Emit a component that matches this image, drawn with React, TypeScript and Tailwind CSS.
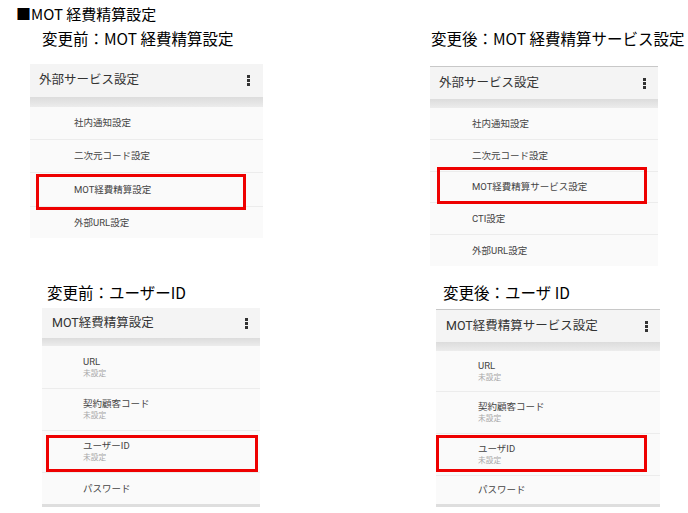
import React from "react";

type Item = { label: string; sub?: string; h: number };
type Box = { x: number; y: number; w: number; h: number };

const docFont = { fontFamily: "'Noto Sans CJK JP', 'DejaVu Sans', sans-serif" };
const uiFont = { fontFamily: "Roboto, 'Noto Sans CJK JP', sans-serif" };

function Kebab() {
  return (
    <div className="flex flex-col gap-[1px]">
      <span className="block w-[3px] h-[3px] bg-[#333]" />
      <span className="block w-[3px] h-[3px] bg-[#333]" />
      <span className="block w-[3px] h-[3px] bg-[#333]" />
    </div>
  );
}

function Panel(props: {
  width: number;
  headerH: number;
  bandH: number;
  title: string;
  titleX: number;
  textX: number;
  items: Item[];
  box: Box;
  topLine?: boolean;
  bottomBand?: boolean;
  kebabRight: number;
}) {
  const { width, headerH, bandH, title, titleX, textX, items, box, topLine, bottomBand, kebabRight } = props;
  return (
    <div className="relative bg-[#fafafa]" style={{ width, ...uiFont }}>
      {topLine && <div className="h-[1px] bg-[#c8c8c8]" />}
      <div
        className="flex items-center justify-between bg-[#f4f4f4] text-[12.5px] text-[#333]"
        style={{ height: headerH, paddingLeft: titleX, paddingRight: kebabRight }}
      >
        <span>{title}</span>
        <Kebab />
      </div>
      <div className="bg-gradient-to-b from-[#dcdcdc] to-[#ececec]" style={{ height: bandH }} />
      {items.map((it, i) => (
        <div
          key={i}
          className={`flex flex-col justify-center ${i < items.length - 1 ? "border-b border-[#ececec]" : ""}`}
          style={{ height: it.h, paddingLeft: textX }}
        >
          <span className="text-[9.5px] leading-[12px] text-[#444]">{it.label}</span>
          {it.sub && <span className="text-[7.7px] leading-[11px] text-[#a8a8a8]">{it.sub}</span>}
        </div>
      ))}
      {bottomBand && <div className="h-[3px] bg-[#dedede]" />}
      <div
        className="absolute border-[3px] border-[#ee0000]"
        style={{ left: box.x, top: box.y, width: box.w, height: box.h }}
      />
    </div>
  );
}

export default function App() {
  return (
    <div className="relative w-[688px] h-[513px] bg-white overflow-hidden text-black">
      <div className="pl-[16px] pt-[5px] h-[24px] text-[15px] leading-[18px]" style={docFont}>
        ■MOT 経費精算設定
      </div>

      <div className="flex items-start h-[242px]">
        <div className="w-[400px]">
          <div className="pl-[42px] mt-[4px] text-[15.5px] leading-[20px] whitespace-nowrap" style={docFont}>
            変更前：MOT 経費精算設定
          </div>
          <div className="ml-[30px] mt-[16px]">
            <Panel
              width={233}
              headerH={33}
              bandH={10}
              title="外部サービス設定"
              titleX={9}
              textX={44}
              kebabRight={13}
              items={[
                { label: "社内通知設定", h: 33 },
                { label: "二次元コード設定", h: 33 },
                { label: "MOT経費精算設定", h: 34 },
                { label: "外部URL設定", h: 31 },
              ]}
              box={{ x: 6, y: 110, w: 210, h: 36 }}
            />
          </div>
        </div>
        <div className="w-[288px]">
          <div className="pl-[31px] mt-[4px] text-[15.5px] leading-[20px] whitespace-nowrap" style={docFont}>
            変更後：MOT 経費精算サービス設定
          </div>
          <div className="ml-[30px] mt-[18px]">
            <Panel
              width={228}
              headerH={32}
              bandH={9}
              title="外部サービス設定"
              titleX={9}
              textX={42}
              kebabRight={12}
              topLine
              items={[
                { label: "社内通知設定", h: 32 },
                { label: "二次元コード設定", h: 32 },
                { label: "MOT経費精算サービス設定", h: 31 },
                { label: "CTI設定", h: 32 },
                { label: "外部URL設定", h: 31 },
              ]}
              box={{ x: 7, y: 101, w: 210, h: 37 }}
            />
          </div>
        </div>
      </div>

      <div className="flex items-start">
        <div className="w-[400px]">
          <div className="pl-[47px] mt-[16px] text-[15.5px] leading-[20px] whitespace-nowrap" style={docFont}>
            変更前：ユーザーID
          </div>
          <div className="ml-[42px] mt-[6px]">
            <Panel
              width={218}
              headerH={30}
              bandH={8}
              title="MOT経費精算設定"
              titleX={10}
              textX={41}
              kebabRight={12}
              bottomBand
              items={[
                { label: "URL", sub: "未設定", h: 43 },
                { label: "契約顧客コード", sub: "未設定", h: 42 },
                { label: "ユーザーID", sub: "未設定", h: 42 },
                { label: "パスワード", h: 31 },
              ]}
              box={{ x: 4, y: 127, w: 212, h: 37 }}
            />
          </div>
        </div>
        <div className="w-[288px]">
          <div className="pl-[43px] mt-[16px] text-[15.5px] leading-[20px] whitespace-nowrap" style={docFont}>
            変更後：ユーザ ID
          </div>
          <div className="ml-[36px] mt-[7px]">
            <Panel
              width={224}
              headerH={32}
              bandH={9}
              title="MOT経費精算サービス設定"
              titleX={10}
              textX={42}
              kebabRight={12}
              topLine
              bottomBand
              items={[
                { label: "URL", sub: "未設定", h: 41 },
                { label: "契約顧客コード", sub: "未設定", h: 42 },
                { label: "ユーザID", sub: "未設定", h: 42 },
                { label: "パスワード", h: 28 },
              ]}
              box={{ x: 0, y: 126, w: 211, h: 37 }}
            />
          </div>
        </div>
      </div>
    </div>
  );
}
